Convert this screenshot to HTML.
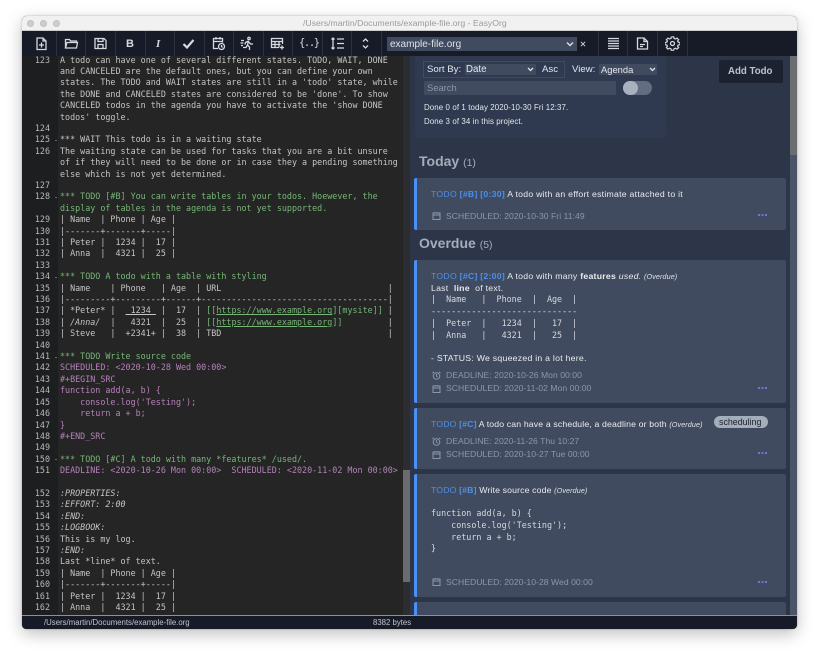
<!DOCTYPE html>
<html><head><meta charset="utf-8"><style>
html,body{margin:0;padding:0;width:819px;height:657px;overflow:hidden;background:#fff}
*{box-sizing:border-box}
body{font-family:"Liberation Sans",sans-serif}
#win{position:absolute;left:22px;top:16px;width:775px;height:613px;border-radius:5px;box-shadow:0 5px 16px rgba(0,0,0,.25),0 0 2px rgba(0,0,0,.25);overflow:hidden;background:#252526}
.a{position:absolute;white-space:pre}
#root{position:absolute;left:0;top:0;width:819px;height:657px;filter:blur(.3px)}
#tb{position:absolute;left:22px;top:16px;width:775px;height:15px;background:#f1f1f1;border-bottom:1px solid #ccc;border-radius:5px 5px 0 0;z-index:3}
.dot{position:absolute;width:7px;height:7px;border-radius:50%;background:#cdcdcd;top:4px;border:1px solid #c0c0c0}
#tools{position:absolute;left:22px;top:31px;width:775px;height:25px;background:#171b27;z-index:3}
.sep{position:absolute;top:31px;width:1px;height:25px;background:#2b303d;z-index:4}
.ic{position:absolute;top:36px;width:15px;height:15px;z-index:5;fill:none;stroke:#d6d9de;stroke-width:1.3}
#ed{position:absolute;left:22px;top:56px;width:388px;height:559px;background:#252526;overflow:hidden;font:8.38px/11.4px "DejaVu Sans Mono",monospace;color:#c5c5c5}
#gut{position:absolute;left:0;top:0;width:36px;height:559px;background:#1d1e20;}
#gn,#tx{position:absolute;top:-1.5px;margin:0;font:inherit;line-height:11.4px}
#gn{left:0;width:28px;text-align:right;color:#b9b9b9}
#tx{left:38px;width:345px}
.g{color:#76b676}.p{color:#b582b8}.i{font-style:italic}.u{text-decoration:underline}
.fd{position:absolute;left:33px;width:2px;height:1px;background:#666}
#right{position:absolute;left:410px;top:56px;width:387px;height:559px;background:#2d3648;overflow:hidden;color:#e4e7ec;font-size:8.7px}
#right .a{line-height:12px}
.card{position:absolute;left:4px;width:372px;background:#414b5f;border-left:3px solid #4a90f5;border-radius:2px}
.sel{position:absolute;background:#414b60;border-radius:1px}
.t{color:#e9ebef;font-weight:400;letter-spacing:.26px}
.t2{letter-spacing:.15px}
.bl{color:#4a90ea}.bb{color:#4a90ea;font-weight:bold}
.ov{font-style:italic;font-size:7.2px;color:#dfe2e7;letter-spacing:.1px}
.m{color:#8e97a7;font-size:8.6px;letter-spacing:.04px}
.mono{font-family:"DejaVu Sans Mono",monospace;font-size:8.38px;color:#d6d9de}
.dots{position:absolute;width:9px;height:2px;background:repeating-linear-gradient(90deg,#7c6fd8 0 2px,transparent 2px 3.5px)}
.mi{position:absolute;width:9px;height:9px;fill:none;stroke:#8e97a7;stroke-width:1}
.h{color:#a3adbb;font-weight:bold;font-size:14px}
.hc{color:#a3adbb;font-size:10.5px;font-weight:normal}
#sb{position:absolute;left:22px;top:615px;width:775px;height:14px;background:#171b27;border-top:1px solid #8d9096;border-radius:0 0 4px 4px;z-index:3;color:#bfc3ca;font-size:7.8px}
</style></head><body>
<div id="root">
<div id="win"></div>
<div id="tb">
 <div class="dot" style="left:5px"></div><div class="dot" style="left:18px"></div><div class="dot" style="left:31px"></div>
 <div class="a" style="left:281px;top:1px;font-size:8.7px;line-height:13px;color:#9b9b9b">/Users/martin/Documents/example-file.org - EasyOrg</div>
</div>
<div id="tools"></div>
<div class="sep" style="left:56px"></div><div class="sep" style="left:85px"></div><div class="sep" style="left:115px"></div><div class="sep" style="left:145px"></div><div class="sep" style="left:174px"></div><div class="sep" style="left:204px"></div><div class="sep" style="left:233px"></div><div class="sep" style="left:263px"></div><div class="sep" style="left:292px"></div><div class="sep" style="left:322px"></div><div class="sep" style="left:351px"></div><div class="sep" style="left:381px"></div><div class="sep" style="left:598px"></div><div class="sep" style="left:627px"></div><div class="sep" style="left:657px"></div><div class="sep" style="left:687px"></div>

<svg class="ic" style="left:34px" viewBox="0 0 15 15"><path d="M3 2h6l3 3v8.500H3zM9 2v3h3M7.500 6.500v5M5 9h5"/></svg>
<svg class="ic" style="left:64px" viewBox="0 0 15 15"><path d="M1.500 12V3.500h4l1 1.500h6v1.500M1.500 12h11l1-5.500H3z"/></svg>
<svg class="ic" style="left:93px" viewBox="0 0 15 15"><path d="M2 2.500h9l2 2v8H2zM5 2.500v3h5v-3M5 12.500V8.500h5v4"/></svg>
<div class="a" style="left:126px;top:38px;z-index:5;font:bold 11px/13px 'Liberation Sans',sans-serif;color:#d6d9de">B</div>
<div class="a" style="left:156px;top:38px;z-index:5;font:italic bold 11px/13px 'Liberation Serif',serif;color:#d6d9de">I</div>
<svg class="ic" style="left:181px;stroke-width:2.2" viewBox="0 0 15 15"><path d="M2.500 8l3.500 3.500 6.500-7.500"/></svg>
<svg class="ic" style="left:211px" viewBox="0 0 15 15"><path d="M7 12.500H2.500v-10h9v4M2.500 5.500h9M5 1v2.500M9 1v2.500"/><circle cx="10.500" cy="10.500" r="3"/><path d="M10.500 9v1.500l1 1"/></svg>
<svg class="ic" style="left:240px" viewBox="0 0 15 15"><circle cx="9" cy="2.500" r="1.200"/><path d="M8.500 5L5.500 6.500 5 8.500M8.500 5l-1 4 2 2v3M7.500 9L6 11.500H3M9 6l1.500 2H13M1 4.500h3M.5 7h3M1 9.500h2"/></svg>
<svg class="ic" style="left:270px" viewBox="0 0 15 15"><path d="M9 11.500H1.500v-9h11V8M1.500 5.500h11M1.500 8.500h9M5 5.500v6M9 5.500v6M12 9.500v4M10 11.500h4"/></svg>
<div class="a" style="left:299px;top:37px;z-index:5;font:10.5px/13px 'DejaVu Sans Mono',monospace;letter-spacing:-1.4px;color:#d6d9de">{..}</div>
<svg class="ic" style="left:330px" viewBox="0 0 15 15"><path d="M3 2v11M1.500 3.500L3 2l1.500 1.500M1.500 11.500L3 13l1.500-1.500M7 3h7M7 7.500h7M7 12h7" stroke-width="1.300"/></svg>
<svg class="ic" style="left:358px" viewBox="0 0 15 15"><path d="M5 5.500l2.500-2.500 2.500 2.500M5 9.500l2.500 2.500 2.500-2.500"/></svg>
<div style="position:absolute;left:387px;top:37px;width:190px;height:14px;background:#414b60;z-index:5"></div>
<div class="a" style="left:390px;top:38px;z-index:6;font-size:10px;line-height:13px;color:#dfe2e7">example-file.org</div>
<svg class="ic" style="left:566px;top:41px;width:8px;height:6px;stroke-width:1.5" viewBox="0 0 8 6"><path d="M1 1.500l3 3 3-3"/></svg>
<svg class="ic" style="left:580px;top:41px;width:6px;height:6px;stroke-width:1" viewBox="0 0 7 7"><path d="M1 1l5 5M6 1l-5 5"/></svg>
<svg class="ic" style="left:606px" viewBox="0 0 15 15"><path d="M2 3h11M2 5.500h11M2 8h11M2 10.500h11M2 13h11" transform="translate(0 -.5)"/></svg>
<svg class="ic" style="left:635px" viewBox="0 0 15 15"><path d="M2.500 2h6.500l3.500 3.500v7.500h-10zM9 2v3.500h3.500M5 8.500h5M5 10.500h3"/></svg>
<svg class="ic" style="left:665px" viewBox="0 0 15 15"><circle cx="7.500" cy="7.500" r="2"/><path d="M6.300 1.500h2.400l.4 1.800 1.300.6 1.600-1 1.600 1.700-1 1.500.6 1.300 1.800.4v2.400l-1.800.4-.6 1.300 1 1.500-1.600 1.700-1.600-1-1.300.6-.4 1.800" transform="translate(0 -.5) scale(1 .9)"/><path d="M6.300 1.500l-.4 1.800-1.300.6-1.600-1-1.600 1.700 1 1.500-.6 1.300-1.800.4v2.400l1.800.4.6 1.300-1 1.500 1.600 1.700 1.600-1 1.300.6.400 1.800h2.400" transform="translate(0 -.5) scale(1 .9)"/></svg>

<div id="ed">
<div id="gut"></div>
<pre id="gn">123





124
125
126


127
128

129
130
131
132
133
134
135
136
137
138
139
140
141
142
143
144
145
146
147
148
149
150
151

152
153
154
155
156
157
158
159
160
161
162</pre>
<pre id="tx">A todo can have one of several different states. TODO, WAIT, DONE
and CANCELED are the default ones, but you can define your own
states. The TODO and WAIT states are still in a 'todo' state, while
the DONE and CANCELED states are considered to be 'done'. To show
CANCELED todos in the agenda you have to activate the 'show DONE
todos' toggle.

*** WAIT This todo is in a waiting state
The waiting state can be used for tasks that you are a bit unsure
of if they will need to be done or in case they a pending something
else which is not yet determined.

<span class="g">*** TODO [#B] You can write tables in your todos. Hoewever, the
display of tables in the agenda is not yet supported.</span>
| Name  | Phone | Age |
|-------+-------+-----|
| Peter |  1234 |  17 |
| Anna  |  4321 |  25 |

<span class="g">*** TODO A todo with a table with styling</span>
| Name    | Phone   | Age  | URL                                 |
|---------+---------+------+-------------------------------------|
| *Peter* |  <span class="u">_1234_</span> |  17  | <span class="g">[[<span class="u">https://www.example.org</span>][mysite]]</span> |
| <span class="i">/Anna/</span>  |   4321  |  25  | <span class="g">[[<span class="u">https://www.example.org</span>]]</span>         |
| Steve   |  +2341+ |  38  | TBD                                 |

<span class="g">*** TODO Write source code</span>
<span class="p">SCHEDULED: &lt;2020-10-28 Wed 00:00&gt;
#+BEGIN_SRC
function add(a, b) {
    console.log('Testing');
    return a + b;
}
#+END_SRC</span>

<span class="g">*** TODO [#C] A todo with many *features* /used/.</span>
<span class="p">DEADLINE: &lt;2020-10-26 Mon 00:00&gt;  SCHEDULED: &lt;2020-11-02 Mon 00:00&gt;</span>

<span class="i">:PROPERTIES:
:EFFORT: 2:00
:END:
:LOGBOOK:</span>
This is my log.
<span class="i">:END:</span>
Last *line* of text.
| Name  | Phone | Age |
|-------+-------+-----|
| Peter |  1234 |  17 |
| Anna  |  4321 |  25 |</pre>
<div class="fd" style="top:84px"></div><div class="fd" style="top:141px"></div><div class="fd" style="top:221px"></div><div class="fd" style="top:301px"></div><div class="fd" style="top:403px"></div>
<div style="position:absolute;left:381px;top:0;width:7px;height:559px;background:#2c2d30"></div>
<div style="position:absolute;left:381px;top:414px;width:7px;height:112px;background:#6a6b6e"></div>
</div>

<div id="right">
 <div style="position:absolute;left:5px;top:0;width:251px;height:82px;background:#2f3950;border-radius:0 0 4px 4px"></div>
 <div style="position:absolute;left:13px;top:5px;width:142px;height:17px;border:1px solid #414b60"></div>
 <div class="a" style="left:17px;top:8px;font-size:9.6px">Sort By:</div>
 <div class="sel" style="left:55px;top:8px;width:71px;height:11px"></div>
 <div class="a" style="left:56px;top:8px;font-size:9.7px">Date</div>
 <svg class="mi" style="left:117px;top:11px;width:7px;height:5px;stroke:#dfe2e7;stroke-width:1.300" viewBox="0 0 7 5"><path d="M1 1l2.500 2.500L6 1"/></svg>
 <div class="a" style="left:132px;top:8px;font-size:9.6px">Asc</div>
 <div class="a" style="left:162px;top:8px;font-size:9.6px">View:</div>
 <div class="sel" style="left:189px;top:8px;width:58px;height:11px"></div>
 <div class="a" style="left:191px;top:8px;font-size:9.4px">Agenda</div>
 <svg class="mi" style="left:239px;top:11px;width:7px;height:5px;stroke:#dfe2e7;stroke-width:1.300" viewBox="0 0 7 5"><path d="M1 1l2.500 2.500L6 1"/></svg>
 <div class="sel" style="left:14px;top:25px;width:192px;height:14px"></div>
 <div class="a" style="left:17px;top:26px;font-size:9.4px;color:#8e97a7">Search</div>
 <div style="position:absolute;left:213px;top:25px;width:29px;height:14px;border-radius:7px;background:#626d82"></div>
 <div style="position:absolute;left:213px;top:25px;width:15px;height:14px;border-radius:7px;background:#a9b1bf"></div>
 <div class="a" style="left:14px;top:46px;font-size:7.9px;letter-spacing:.1px">Done 0 of 1 today 2020-10-30 Fri 12:37.</div>
 <div class="a" style="left:14px;top:60px;font-size:7.9px;letter-spacing:.1px">Done 3 of 34 in this project.</div>
 <div style="position:absolute;left:309px;top:4px;width:64px;height:23px;background:#1d2230;border-radius:2px"></div>
 <div class="a" style="left:318px;top:10px;font-size:9.7px;font-weight:bold;color:#bcc3ce">Add Todo</div>

 <div class="a h" style="left:9px;top:99px">Today <span class="hc">(1)</span></div>
 <div class="card" style="top:122px;height:52px"></div>
 <div class="a t" style="left:21px;top:132px"><span class="bl">TODO</span> <span class="bb">[#B] [0:30]</span> A todo with an effort estimate attached to it</div>
 <svg class="mi" style="left:22px;top:155px" viewBox="0 0 9 9"><path d="M1 2h7v6.500H1zM1 4h7M3 1v1.500M6 1v1.500"/></svg>
 <div class="a m" style="left:36px;top:154px">SCHEDULED: 2020-10-30 Fri 11:49</div>
 <div class="dots" style="left:348px;top:158px"></div>
 <div class="a h" style="left:9px;top:181px">Overdue <span class="hc">(5)</span></div>

 <div class="card" style="top:204px;height:143px"></div>
 <div class="a t" style="left:21px;top:214px"><span class="bl">TODO</span> <span class="bb">[#C] [2:00]</span> A todo with many <b>features</b> <i>used.</i> <span class="ov">(Overdue)</span></div>
 <div class="a t" style="left:21px;top:226px">Last <b>&nbsp;line&nbsp;</b> of text.</div>
 <div class="a mono" style="left:21px;top:237px">|  Name   |  Phone  |  Age  |</div>
 <div class="a mono" style="left:21px;top:249px">-----------------------------</div>
 <div class="a mono" style="left:21px;top:261px">|  Peter  |   1234  |   17  |</div>
 <div class="a mono" style="left:21px;top:273px">|  Anna   |   4321  |   25  |</div>
 <div class="a t" style="left:21px;top:296px">- STATUS: We squeezed in a lot here.</div>
 <svg class="mi" style="left:22px;top:315px" viewBox="0 0 9 9"><circle cx="4.500" cy="5" r="3.300"/><path d="M4.500 3v2l1 1M.5 2L2 .8M8.500 2L7 .8"/></svg>
 <div class="a m" style="left:36px;top:313px">DEADLINE: 2020-10-26 Mon 00:00</div>
 <svg class="mi" style="left:22px;top:328px" viewBox="0 0 9 9"><path d="M1 2h7v6.500H1zM1 4h7M3 1v1.500M6 1v1.500"/></svg>
 <div class="a m" style="left:36px;top:326px">SCHEDULED: 2020-11-02 Mon 00:00</div>
 <div class="dots" style="left:348px;top:331px"></div>

 <div class="card" style="top:352px;height:61px"></div>
 <div class="a t t2" style="left:21px;top:362px"><span class="bl">TODO</span> <span class="bb">[#C]</span> A todo can have a schedule, a deadline or both <span class="ov">(Overdue)</span></div>
 <div style="position:absolute;left:304px;top:360px;width:54px;height:12px;border-radius:6px;background:#a3adbb"></div>
 <div class="a" style="left:309px;top:360px;font-size:8.9px;color:#20242e">scheduling</div>
 <svg class="mi" style="left:22px;top:381px" viewBox="0 0 9 9"><circle cx="4.500" cy="5" r="3.300"/><path d="M4.500 3v2l1 1M.5 2L2 .8M8.500 2L7 .8"/></svg>
 <div class="a m" style="left:36px;top:379px">DEADLINE: 2020-11-26 Thu 10:27</div>
 <svg class="mi" style="left:22px;top:394px" viewBox="0 0 9 9"><path d="M1 2h7v6.500H1zM1 4h7M3 1v1.500M6 1v1.500"/></svg>
 <div class="a m" style="left:36px;top:392px">SCHEDULED: 2020-10-27 Tue 00:00</div>
 <div class="dots" style="left:348px;top:396px"></div>

 <div class="card" style="top:418px;height:123px"></div>
 <div class="a t t2" style="left:21px;top:428px"><span class="bl">TODO</span> <span class="bb">[#B]</span> Write source code <span class="ov">(Overdue)</span></div>
 <div class="a mono" style="left:21px;top:451px">function add(a, b) {</div>
 <div class="a mono" style="left:21px;top:463px">    console.log('Testing');</div>
 <div class="a mono" style="left:21px;top:475px">    return a + b;</div>
 <div class="a mono" style="left:21px;top:486px">}</div>
 <svg class="mi" style="left:22px;top:521px" viewBox="0 0 9 9"><path d="M1 2h7v6.500H1zM1 4h7M3 1v1.500M6 1v1.500"/></svg>
 <div class="a m" style="left:36px;top:520px">SCHEDULED: 2020-10-28 Wed 00:00</div>
 <div class="dots" style="left:348px;top:525px"></div>

 <div class="card" style="top:546px;height:30px"></div>
 <div class="a bl" style="left:21px;top:556px;letter-spacing:.24px">TODO <span class="bb">[#C] [0:30]</span></div>

 <div style="position:absolute;left:380px;top:0;width:7px;height:559px;background:#4a5568"></div>
 <div style="position:absolute;left:380px;top:0;width:7px;height:99px;background:#6b6d70"></div>
</div>

<div id="sb">
 <div class="a" style="left:22px;top:1px;line-height:12px">/Users/martin/Documents/example-file.org</div>
 <div class="a" style="left:351px;top:1px;line-height:12px">8382 bytes</div>
</div>
</div>
</body></html>
